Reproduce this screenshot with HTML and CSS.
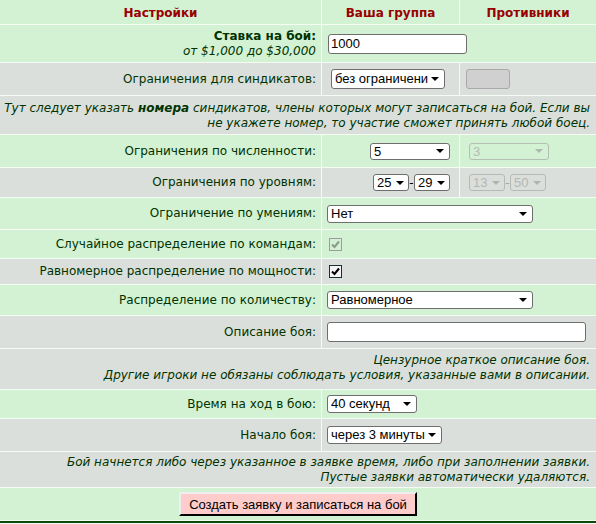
FILE: index.html
```html
<!DOCTYPE html>
<html lang="ru">
<head>
  <meta charset="UTF-8" />
  <title>Создать заявку на бой</title>
  <link rel="stylesheet" href="styles.css">
</head>
<body>

  <form class="battle-form" onsubmit="return false">

    <div class="row row-head">
      <div class="cell green head">Настройки</div>
      <div class="cell green head">Ваша группа</div>
      <div class="cell green head">Противники</div>
    </div>

    <div class="row row-stake">
      <div class="cell green label">
        <div>
          <b>Ставка на бой:</b><br>
          <i>от $1,000 до $30,000</i>
        </div>
      </div>
      <div class="cell green field span2"><input class="text stake" type="text" value="1000"></div>
    </div>

    <div class="row row-synd">
      <div class="cell grey label">Ограничения для синдикатов:</div>
      <div class="cell grey field">
        <select class="sel synd"><option>без ограничени</option></select>
      </div>
      <div class="cell grey field far"><input class="text off-box" type="text" disabled></div>
    </div>

    <div class="row row-note1">
      <div class="cell grey note wide">
        Тут следует указать <b>номера</b> синдикатов, члены которых могут записаться на бой. Если вы<br>
        не укажете номер, то участие сможет принять любой боец.
      </div>
    </div>

    <div class="row row-count">
      <div class="cell green label">Ограничения по численности:</div>
      <div class="cell green field ours">
        <select class="sel count"><option>5</option></select>
      </div>
      <div class="cell green field theirs">
        <select class="sel count" disabled><option>3</option></select>
      </div>
    </div>

    <div class="row row-levels">
      <div class="cell grey label">Ограничения по уровням:</div>
      <div class="cell grey field ours">
        <select class="sel lvl"><option>25</option></select><span class="dash">-</span><select class="sel lvl"><option>29</option></select>
      </div>
      <div class="cell grey field theirs">
        <select class="sel lvl" disabled><option>13</option></select><span class="dash off">-</span><select class="sel lvl" disabled><option>50</option></select>
      </div>
    </div>

    <div class="row row-skills">
      <div class="cell green label">Ограничение по умениям:</div>
      <div class="cell green field span2">
        <select class="sel long"><option>Нет</option></select>
      </div>
    </div>

    <div class="row row-random">
      <div class="cell green label">Случайное распределение по командам:</div>
      <div class="cell green field span2">
        <span class="box off">
          <svg width="9" height="9" viewBox="0 0 9 9"><path d="M1 4.5 L3.5 7 L8 1.5" fill="none" stroke="currentColor" stroke-width="2"/></svg>
        </span>
      </div>
    </div>

    <div class="row row-power">
      <div class="cell grey label">Равномерное распределение по мощности:</div>
      <div class="cell grey field span2">
        <span class="box">
          <svg width="9" height="9" viewBox="0 0 9 9"><path d="M1 4.5 L3.5 7 L8 1.5" fill="none" stroke="currentColor" stroke-width="2"/></svg>
        </span>
      </div>
    </div>

    <div class="row row-spread">
      <div class="cell green label">Распределение по количеству:</div>
      <div class="cell green field span2">
        <select class="sel long"><option>Равномерное</option></select>
      </div>
    </div>

    <div class="row row-desc">
      <div class="cell grey label">Описание боя:</div>
      <div class="cell grey field span2"><input class="text desc" type="text"></div>
    </div>

    <div class="row row-note2">
      <div class="cell grey note wide">
        Цензурное краткое описание боя.<br>
        Другие игроки не обязаны соблюдать условия, указанные вами в описании.
      </div>
    </div>

    <div class="row row-time">
      <div class="cell green label">Время на ход в бою:</div>
      <div class="cell green field span2">
        <select class="sel time"><option>40 секунд</option></select>
      </div>
    </div>

    <div class="row row-start">
      <div class="cell grey label">Начало боя:</div>
      <div class="cell grey field span2">
        <select class="sel start"><option>через 3 минуты</option></select>
      </div>
    </div>

    <div class="row row-note3">
      <div class="cell grey note wide">
        Бой начнется либо через указанное в заявке время, либо при заполнении заявки.<br>
        Пустые заявки автоматически удаляются.
      </div>
    </div>

    <div class="row row-submit">
      <div class="cell green wide center">
        <button class="submit" type="submit">Создать заявку и записаться на бой</button>
      </div>
    </div>

  </form>

</body>
</html>
```

FILE: styles.css
```css
body {
  margin: 0;
  background: #f2fbf2;
  font-family: 'DejaVu Sans', Verdana, sans-serif;
  font-size: 12px;
  color: #003300;
}

.battle-form {
  width: 596px;
  background: #f4fcf4;
  border-bottom: 2px solid #0b4a0b;
}

.row {
  display: grid;
  grid-template-columns: 321px 137px 136px;
  column-gap: 1px;
  margin-bottom: 1px;
}

/* row heights */
.row-head   { height: 24px; }
.row-stake  { height: 37px; }
.row-synd   { height: 32px; }
.row-note1  { height: 38px; }
.row-count  { height: 32px; }
.row-levels { height: 29px; }
.row-skills { height: 31px; }
.row-random { height: 28px; }
.row-power  { height: 25px; }
.row-spread { height: 30px; }
.row-desc   { height: 32px; }
.row-note2  { height: 40px; }
.row-time   { height: 28px; }
.row-start  { height: 32px; }
.row-note3  { height: 35px; }
.row-submit { height: 32px; }

.cell {
  display: flex;
  align-items: center;
  min-width: 0;
}

.green { background: #d3f1d3; }
.grey  { background: #dbdfdb; }

.head {
  justify-content: center;
  font-weight: bold;
  color: #990000;
  padding-top: 1px;
}

.label {
  justify-content: flex-end;
  text-align: right;
  padding-right: 5px;
  line-height: 15px;
}

.field {
  padding-left: 5px;
}

.far { padding-left: 6px; }

/* our group sits against the divider, opponents mirror it */
.ours {
  justify-content: flex-end;
  padding: 0 9px 0 0;
}

.theirs { padding-left: 9px; }

.center {
  justify-content: center;
  padding-left: 0;
}

.span2 { grid-column: span 2; }
.wide { grid-column: 1 / -1; }

.note {
  display: block;
  text-align: right;
  font-style: italic;
  line-height: 15px;
  padding: 4px 6px 0 0;
}

.row-note1 .note { padding-top: 5px; }
.row-note3 .note { padding-top: 3px; }

/* form controls */
.text, .sel {
  box-sizing: border-box;
  font-family: 'Liberation Sans', Arial, sans-serif;
  font-size: 13px;
  color: #000;
  background-color: #fff;
  border: 1px solid #6e6e6e;
  border-radius: 3px;
  margin: 0;
}

.text {
  height: 20px;
  padding: 0 2px;
}

.stake { width: 139px; margin-left: 1px; }
.desc { width: 259px; }

.off-box {
  width: 44px;
  height: 20px;
  background: #d0d0d0;
  border-color: #a9a9a9;
}

.sel {
  appearance: none;
  height: 18px;
  padding: 0 12px 0 3px;
  line-height: 16px;
  background-image: url("data:image/svg+xml,%3Csvg xmlns='http://www.w3.org/2000/svg' width='8' height='4'%3E%3Cpath d='M0 0h8L4 4z' fill='%23000'/%3E%3C/svg%3E");
  background-repeat: no-repeat;
  background-position: right 5px center;
}

.sel:disabled {
  color: #a6a6a6;
  border-color: #a9a9a9;
  background-color: transparent;
  background-image: url("data:image/svg+xml,%3Csvg xmlns='http://www.w3.org/2000/svg' width='8' height='4'%3E%3Cpath d='M0 0h8L4 4z' fill='%23a0a0a0'/%3E%3C/svg%3E");
}

.synd { width: 114px; height: 20px; margin-left: 4px; }
.count { width: 80px; height: 17px; }
.lvl { width: 36px; height: 17px; padding-right: 10px; background-position: right 4px center; }
.long { width: 206px; }
.time { width: 90px; }
.start { width: 115px; padding-right: 10px; }

.dash {
  width: 5px;
  text-align: center;
  color: #000;
}

.dash.off { color: #a6a6a6; }

.box {
  box-sizing: border-box;
  width: 13px;
  height: 13px;
  margin-left: 2px;
  border: 1px solid #1f2b3a;
  background: #f4f4f4;
  color: #000;
  display: flex;
  align-items: center;
  justify-content: center;
}

.box.off {
  border-color: #9c9c9c;
  background: transparent;
  color: #8a9a8a;
}

.submit {
  font-family: 'Liberation Sans', Arial, sans-serif;
  font-size: 13px;
  color: #000;
  background: #ffcccc;
  border: 2px outset #eeeeee;
  border-right-color: #555;
  border-bottom-color: #555;
  height: 24px;
  padding: 0 8px;
  cursor: pointer;
}
```
